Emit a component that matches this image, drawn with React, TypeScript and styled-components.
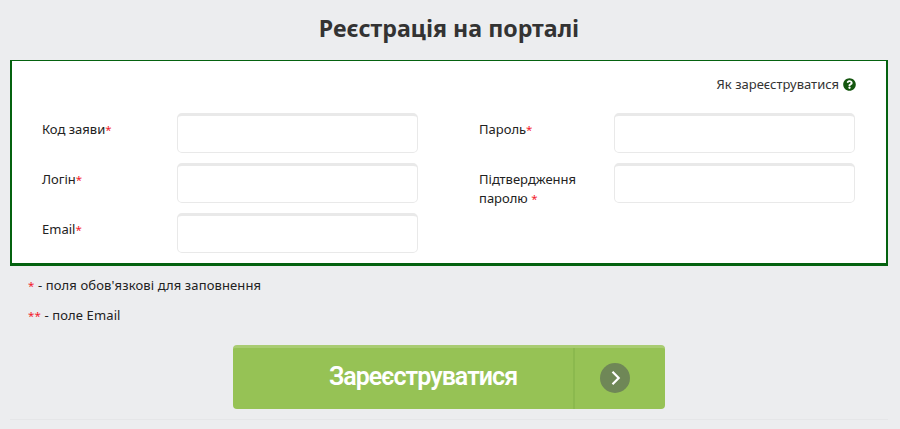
import React from 'react'
import styled, { createGlobalStyle } from 'styled-components'
import { FaQuestionCircle } from 'react-icons/fa'

const GlobalStyle = createGlobalStyle`
  html, body {
    margin: 0;
    padding: 0;
    background: #ecedef;
    font-family: "Noto Sans", "Open Sans", sans-serif;
    font-size: 13px;
    color: #222;
  }
`

const Page = styled.div`
  width: 900px;
  height: 429px;
  overflow: hidden;
  padding: 0 12px 0 10px;
  box-sizing: border-box;
`

const Title = styled.h1`
  margin: 0;
  height: 60px;
  line-height: 56px;
  text-align: center;
  font-size: 23.2px;
  font-weight: 700;
  color: #333;
`

const Panel = styled.form`
  height: 206px;
  box-sizing: border-box;
  background: #fff;
  border: solid #04620f;
  border-width: 1px 2px 3px 2px;
  padding: 0 30px 0 30px;
`

const HelpRow = styled.div`
  height: 52px;
  padding-bottom: 6px;
  box-sizing: border-box;
  display: flex;
  justify-content: flex-end;
  align-items: center;
  gap: 4px;
  line-height: 19px;
  color: #333;
  svg {
    color: #14560f;
    font-size: 13px;
  }
`

const Columns = styled.div`
  display: grid;
  grid-template-columns: 376px 376px;
  column-gap: 61px;
`

const Column = styled.div`
  display: flex;
  flex-direction: column;
  gap: 10px;
`

const Field = styled.div`
  display: grid;
  grid-template-columns: 135px 241px;
`

const Label = styled.label`
  padding-top: 7px;
  line-height: 19px;
  color: #222;
`

const Star = styled.span`
  color: #f3202c;
  font-size: 11.5px;
`

const Input = styled.input`
  height: 40px;
  width: 241px;
  box-sizing: border-box;
  background: #fff;
  border: 1px solid #e9e9e9;
  border-top: 3px solid #e9e9e9;
  border-radius: 5px;
  outline: none;
`

const Notes = styled.div`
  padding-left: 18px;
  padding-top: 4px;
`

const Note = styled.p`
  margin: 0;
  height: 30px;
  line-height: 30px;
  letter-spacing: 0.12px;
  color: #222;
`

const SubmitRow = styled.div`
  display: flex;
  justify-content: center;
  margin-top: 15px;
`

const Submit = styled.button`
  width: 432px;
  height: 64px;
  padding: 0;
  display: flex;
  box-sizing: border-box;
  background: #96c255;
  border: none;
  border-top: 3px solid #a9cc72;
  border-radius: 4px;
  color: #fff;
  font-family: Roboto, "Noto Sans", sans-serif;
  cursor: pointer;
`

const SubmitText = styled.span`
  width: 342px;
  box-sizing: border-box;
  border-right: 2px solid #8bb94e;
  height: 100%;
  display: flex;
  align-items: center;
  justify-content: center;
  font-size: 25px;
  font-weight: 600;
  letter-spacing: -0.95px;
  padding-left: 40px;
  padding-bottom: 5px;
`

const SubmitArrow = styled.span`
  flex: 1;
  display: flex;
  align-items: center;
  justify-content: center;
  padding: 0 10px 1px 0;
  svg {
    display: block;
  }
`

const Divider = styled.div`
  margin-top: 10px;
  border-top: 1px solid #e5e6e8;
`

const fields = [
  [
    { id: 'code', lines: ['Код заяви'] },
    { id: 'login', lines: ['Логін'] },
    { id: 'email', lines: ['Email'] }
  ],
  [
    { id: 'password', lines: ['Пароль'] },
    { id: 'confirm', lines: ['Підтвердження', 'паролю '] }
  ]
]

export default function App () {
  return (
    <Page>
      <GlobalStyle />
      <Title>Реєстрація на порталі</Title>
      <Panel onSubmit={(e) => { e.preventDefault() }}>
        <HelpRow>
          Як зареєструватися <FaQuestionCircle />
        </HelpRow>
        <Columns>
          {fields.map((column, i) => (
            <Column key={i}>
              {column.map((f) => (
                <Field key={f.id}>
                  <Label htmlFor={f.id}>
                    {f.lines.map((line, n) => (
                      <React.Fragment key={n}>{n > 0 && <br />}{line}</React.Fragment>
                    ))}
                    <Star>*</Star>
                  </Label>
                  <Input id={f.id} type="text" />
                </Field>
              ))}
            </Column>
          ))}
        </Columns>
      </Panel>
      <Notes>
        <Note><Star>*</Star> - поля обов'язкові для заповнення</Note>
        <Note><Star>**</Star> - поле Email</Note>
      </Notes>
      <SubmitRow>
        <Submit type="submit">
          <SubmitText>Зареєструватися</SubmitText>
          <SubmitArrow>
            <svg width="30" height="30" viewBox="0 0 30 30">
              <circle cx="15" cy="15" r="15" fill="#6f8757" />
              <path d="M12.5 8.8 L18.7 15 L12.5 21.2" fill="none" stroke="#fff" strokeWidth="2.2" />
            </svg>
          </SubmitArrow>
        </Submit>
      </SubmitRow>
      <Divider />
    </Page>
  )
}
